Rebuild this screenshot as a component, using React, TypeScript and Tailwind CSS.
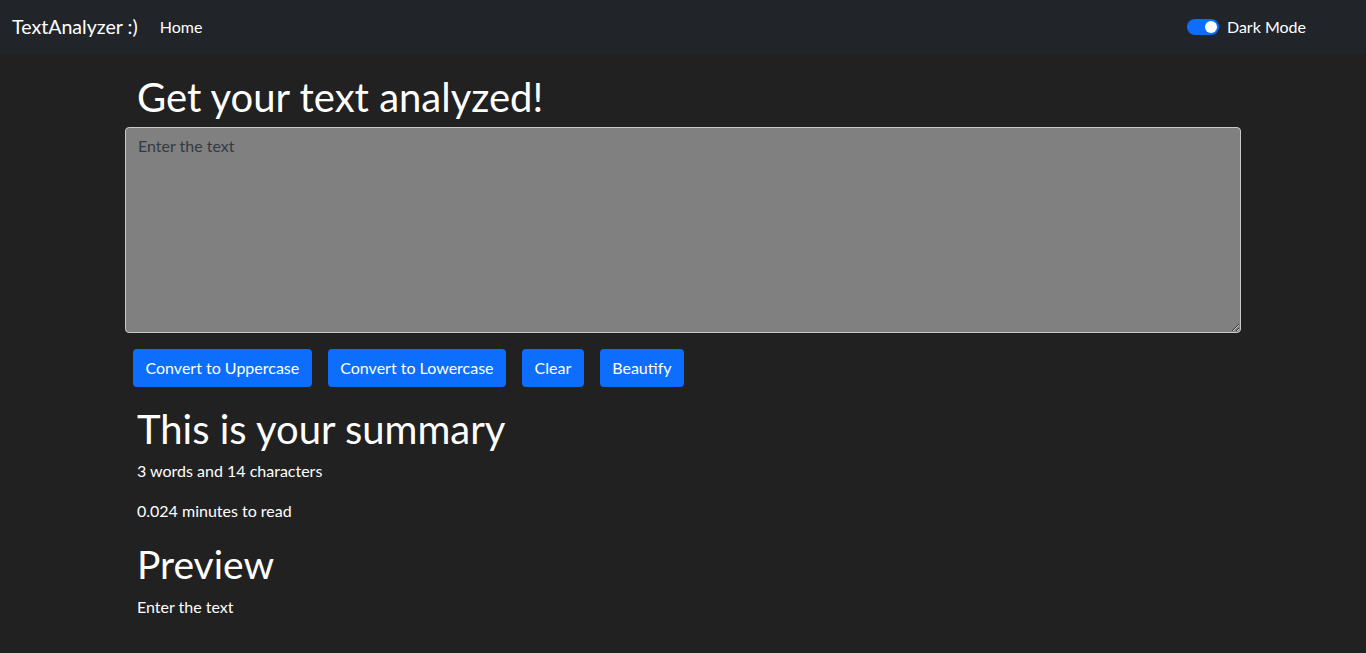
import { useState } from "react";

const font = { fontFamily: '"Segoe UI", Lato, "Liberation Sans", sans-serif' };

const Navbar = ({ dark, onToggle }: { dark: boolean; onToggle: () => void }) => {
    return (
        <nav className="h-[54px] bg-[#212529] flex items-center justify-between px-3">
            <div className="flex items-center">
                <a href="#" className="text-[19.6px] text-white mr-[14px] leading-[30px]">TextAnalyzer :)</a>
                <a href="#" className="text-base text-white px-2 leading-6">Home</a>
            </div>
            <div className="flex items-center mr-[48px]">
                <button
                    onClick={onToggle}
                    className={`w-8 h-4 rounded-full flex items-center px-[2px] ${dark ? "bg-[#0d6efd] justify-end" : "bg-white justify-start border border-gray-400"}`}
                >
                    <span className={`w-3 h-3 rounded-full ${dark ? "bg-white" : "bg-gray-400"}`} />
                </button>
                <label className="text-base text-white ml-2 leading-6">Dark Mode</label>
            </div>
        </nav>
    );
};

export default function App() {
    const [dark, setDark] = useState(true);
    const [text, setText] = useState("");
    const preview = "Enter the text";
    const buttons = ["Convert to Uppercase", "Convert to Lowercase", "Clear", "Beautify"];

    return (
        <div className="min-h-[653px] bg-[#212121] text-white" style={font}>
            <Navbar dark={dark} onToggle={() => setDark(!dark)} />
            <div className="w-[1140px] mx-auto px-3 mt-[17px]">
                <h1 className="text-[40px] leading-[48px] mb-[6px] pt-[2px] px-3">Get your text analyzed!</h1>
                <div className="mb-4">
                    <textarea
                        rows={8}
                        value={text}
                        onChange={(e) => setText(e.target.value)}
                        placeholder="Enter the text"
                        className="block w-full h-[206px] bg-[#808080] border border-[#c8c8c8] rounded-[4px] px-3 py-[6px] text-base leading-6 text-[#212529] placeholder:text-[#343a40] outline-none"
                    />
                </div>
                <div className="flex">
                    {buttons.map((b) => (
                        <button key={b} className="mx-2 h-[38px] px-[12.5px] bg-[#0d6efd] text-white text-base leading-6 rounded-[4px]">
                            {b}
                        </button>
                    ))}
                </div>
            </div>
            <div className="w-[1140px] mx-auto px-3 my-4 pt-[2px]">
                <div className="px-3">
                    <h1 className="text-[40px] leading-[48px] mb-[6px]">This is your summary</h1>
                    <p className="text-base leading-6 mb-4">3 words and 14 characters</p>
                    <p className="text-base leading-6 mb-[17px]">0.024 minutes to read</p>
                    <h2 className="text-[39px] leading-[48px] mb-[7px]">Preview</h2>
                    <p className="text-base leading-6">{preview}</p>
                </div>
            </div>
        </div>
    );
}
